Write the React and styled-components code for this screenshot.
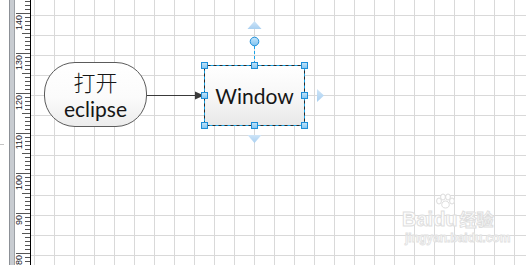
import React from 'react'
import styled, { createGlobalStyle } from 'styled-components'

const GlobalStyle = createGlobalStyle`
  html, body {
    margin: 0;
    padding: 0;
    background: #fff;
    overflow: hidden;
  }
`

const CANVAS_LEFT = 31

export default function App() {
  return (
    <Page>
      <GlobalStyle />
      <Ruler />
      <Canvas>
        <Terminator>
          <CjkLine>打开</CjkLine>
          <LatinLine $size={21}>eclipse</LatinLine>
        </Terminator>
        <Process>
          <LatinLine $size={21}>Window</LatinLine>
        </Process>
        <Adornments />
        <Watermark />
      </Canvas>
    </Page>
  )
}

function Ruler() {
  const ticks = []
  for (let k = -3; k <= 63; k++) {
    const y = 13 + 4 * k
    const major = k % 10 === 0
    const half = k % 5 === 0
    const len = major ? 14 : half ? 8 : 5
    ticks.push(<line key={k} x1={15 - len} x2={15} y1={y + 0.5} y2={y + 0.5} stroke="#555" strokeWidth="1" />)
    if (major) {
      ticks.push(
        <text
          key={'t' + k}
          transform={`translate(6.5, ${y + 2}) rotate(-90)`}
          textAnchor="end"
          fontSize="9"
          fontFamily="'Liberation Sans', Arial, sans-serif"
          fill="#1a1a2a"
        >
          {140 - k}
        </text>
      )
    }
  }
  return (
    <RulerBar>
      <RulerPad>
        <PadMark />
      </RulerPad>
      <RulerStrip />
      <RulerScale>
        <svg width="15" height="265">{ticks}</svg>
      </RulerScale>
    </RulerBar>
  )
}

function Handle({ x, y }) {
  return <rect x={x - 3} y={y - 3} width="6" height="6" fill="url(#handleFill)" stroke="#1f8fd8" strokeWidth="1" />
}

function Adornments() {
  const l = 173.5, r = 273.5, t = 65.5, b = 125.5, cx = 223.5, cy = 95.5
  const handles = [
    [l, t], [cx, t], [r, t],
    [l, cy], [r, cy],
    [l, b], [cx, b], [r, b],
  ]
  return (
    <Overlay width="495" height="265">
      <defs>
        <linearGradient id="handleFill" x1="0" y1="0" x2="0" y2="1">
          <stop offset="0" stopColor="#c6e6fb" />
          <stop offset="1" stopColor="#7fc2ef" />
        </linearGradient>
        <linearGradient id="arrowFill" x1="0" y1="0" x2="0" y2="1">
          <stop offset="0" stopColor="#cfe5f8" />
          <stop offset="1" stopColor="#a9d0f1" />
        </linearGradient>
      </defs>

      {/* connector */}
      <line x1="116" y1="95.5" x2="166" y2="95.5" stroke="#3a3a3a" strokeWidth="1.2" />
      <polygon points="173,95.5 164,91.5 164,99.5" fill="#3a3a3a" />

      {/* auto-connect arrows */}
      <polygon points="223.5,21 216.5,29 230.5,29" fill="url(#arrowFill)" />
      <polygon points="216.5,135 230.5,135 223.5,143" fill="url(#arrowFill)" />
      <polygon points="286,89 286,102 293,95.5" fill="url(#arrowFill)" />

      {/* selection */}
      <rect x={l} y={t} width={r - l} height={b - t} fill="none" stroke="#19a3e6" strokeWidth="1" strokeDasharray="3 3" />
      <line x1={cx} y1="46" x2={cx} y2="62" stroke="#19a3e6" strokeWidth="1" strokeDasharray="3 2" />
      <circle cx={cx} cy="41.5" r="4.3" fill="url(#handleFill)" stroke="#1f8fd8" strokeWidth="1" />
      {handles.map(([x, y], i) => (
        <Handle key={i} x={x} y={y} />
      ))}
    </Overlay>
  )
}

function Watermark() {
  return (
    <Mark>
      <MarkRow>
        <MarkWord>Bai</MarkWord>
        <PawWrap>
          <svg width="20" height="16" viewBox="0 0 20 16">
            <g fill="#fff" stroke="#dcdcdc" strokeWidth="1">
              <ellipse cx="4" cy="8" rx="2.4" ry="3" />
              <ellipse cx="8" cy="4" rx="2.4" ry="3" />
              <ellipse cx="13" cy="4" rx="2.4" ry="3" />
              <ellipse cx="17" cy="8" rx="2.4" ry="3" />
              <path d="M10.5 8 C6 8 5 15 10.5 15 C16 15 15 8 10.5 8 Z" />
            </g>
          </svg>
          <MarkWord>du</MarkWord>
        </PawWrap>
        <MarkCjk>经验</MarkCjk>
      </MarkRow>
      <MarkUrl>jingyan.baidu.com</MarkUrl>
    </Mark>
  )
}

const Page = styled.div`
  display: flex;
  width: 526px;
  height: 265px;
  overflow: hidden;
  background: #fff;
`

const RulerBar = styled.div`
  display: flex;
  flex: 0 0 ${CANVAS_LEFT}px;
  height: 100%;
`

const RulerPad = styled.div`
  width: 9px;
  background: #fff;
`

const PadMark = styled.div`
  margin-top: 144px;
  width: 4px;
  height: 1px;
  background: #c4c4c4;
`

const RulerStrip = styled.div`
  width: 4px;
  background: #c8ccd1;
  border-left: 1px solid #8c9096;
  border-right: 1px solid #9da1a6;
`

const RulerScale = styled.div`
  width: 15px;
  background: #fff;
  border-right: 1px solid #000;
  svg {
    display: block;
  }
`

const Canvas = styled.div`
  position: relative;
  flex: 1;
  height: 100%;
  background-color: #fff;
  background-image:
    linear-gradient(to right, #d9d9d9 1px, transparent 1px),
    linear-gradient(to bottom, #d9d9d9 1px, transparent 1px);
  background-size: 20px 20px;
  background-position: 3px 15px;
`

const Shape = styled.div`
  position: absolute;
  box-sizing: border-box;
  display: flex;
  flex-direction: column;
  align-items: center;
  justify-content: center;
  color: #161616;
`

const Terminator = styled(Shape)`
  left: 13px;
  top: 62px;
  width: 103px;
  height: 65px;
  border: 1px solid #5b5b5b;
  border-radius: 31px;
  background: linear-gradient(180deg, #ffffff 0%, #fbfbfb 55%, #ececec 100%);
  padding-top: 1px;
`

const Process = styled(Shape)`
  left: 173px;
  top: 65px;
  width: 101px;
  height: 61px;
  border: 1px solid #2a2a2a;
  background: linear-gradient(180deg, #ffffff 0%, #f7f7f7 50%, #e8e8e8 100%);
`

const CjkLine = styled.div`
  font-family: "Noto Sans CJK SC", sans-serif;
  font-weight: 300;
  font-size: 22px;
  line-height: 28px;
`

const LatinLine = styled.div`
  font-family: Lato, "Open Sans", sans-serif;
  font-size: ${p => p.$size || 20}px;
  line-height: 28px;
`

const Overlay = styled.svg`
  position: absolute;
  left: 0;
  top: 0;
  pointer-events: none;
`

const Mark = styled.div`
  position: absolute;
  left: 371px;
  top: 205px;
  display: flex;
  flex-direction: column;
  align-items: flex-start;
  gap: 2px;
`

const MarkRow = styled.div`
  display: flex;
  align-items: flex-end;
`

const MarkWord = styled.span`
  font-family: "Liberation Sans", Arial, sans-serif;
  font-weight: bold;
  font-size: 20px;
  line-height: 20px;
  color: #fff;
  -webkit-text-stroke: 1px #dedede;
`

const PawWrap = styled.div`
  display: flex;
  flex-direction: column;
  align-items: center;
  margin-top: -12px;
`

const MarkCjk = styled.span`
  font-family: "Noto Sans CJK SC", sans-serif;
  font-weight: bold;
  font-size: 17px;
  line-height: 20px;
  margin-left: 2px;
  color: #fff;
  -webkit-text-stroke: 1px #dedede;
`

const MarkUrl = styled.span`
  font-family: "Liberation Sans", Arial, sans-serif;
  font-weight: bold;
  font-size: 12px;
  line-height: 14px;
  margin-left: 3px;
  color: #fff;
  -webkit-text-stroke: 0.8px #e0e0e0;
`
